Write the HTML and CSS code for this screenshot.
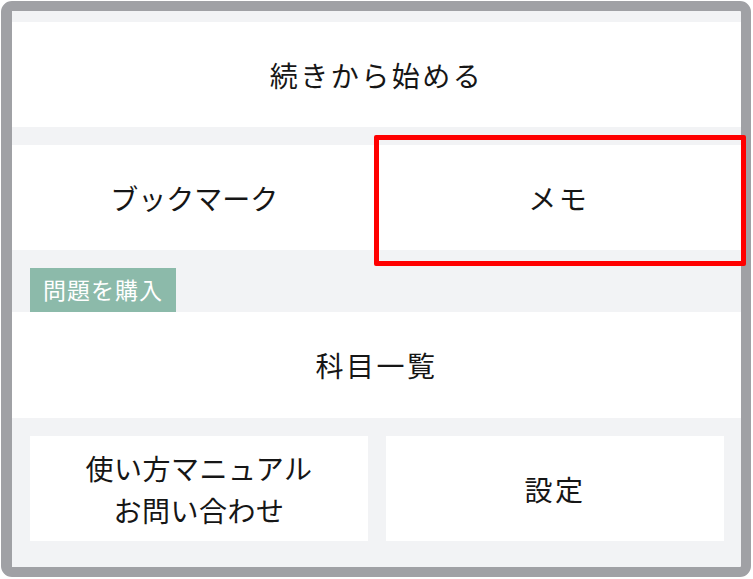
FILE: index.html
```html
<!DOCTYPE html>
<html lang="ja">
<head>
<meta charset="utf-8">
<link rel="stylesheet" href="styles.css">
</head>
<body>
<div class="frame">
  <div class="inner">
    <div class="row row-first"><span class="label">続きから始める</span></div>
    <div class="row row-split">
      <div class="cell"><span class="label tight">ブックマーク</span></div>
      <div class="cell"><span class="label">メモ</span></div>
    </div>
    <div class="badge-area"><span class="badge">問題を購入</span></div>
    <div class="row row-subjects"><span class="label">科目一覧</span></div>
    <div class="cards">
      <div class="card"><span class="label multi">使い方マニュアル<br>お問い合わせ</span></div>
      <div class="card"><span class="label">設定</span></div>
    </div>
  </div>
  <div class="highlight"></div>
</div>
</body>
</html>
```

FILE: styles.css
```css
* { box-sizing: border-box; }
html, body {
  margin: 0;
  padding: 0;
  background: #ffffff;
}
body {
  width: 753px;
  height: 579px;
  padding: 1px 2px 2px 1px;
  font-family: "Noto Sans CJK JP", "Noto Sans", sans-serif;
  color: #161616;
}
.frame {
  position: relative;
  width: 750px;
  height: 576px;
  border: 10px solid #a0a1a5;
  border-left-width: 11px;
  border-radius: 11px;
  background: #f2f3f5;
}
.inner {
  display: flex;
  flex-direction: column;
  height: 100%;
  padding-top: 11px;
}
.row {
  background: #ffffff;
  height: 105px;
  display: flex;
  align-items: center;
  justify-content: center;
}
.row-first { margin-bottom: 18px; }
.row-split { justify-content: stretch; }
.row-split .cell {
  flex: 1;
  height: 100%;
  display: flex;
  align-items: center;
  justify-content: center;
}
.badge-area {
  height: 62px;
  display: flex;
  align-items: flex-end;
  padding-left: 18px;
}
.badge {
  display: inline-flex;
  align-items: center;
  justify-content: center;
  width: 146px;
  height: 44px;
  background: #8cbaaa;
  color: #ffffff;
  font-size: 23px;
  letter-spacing: 1px;
  font-weight: 400;
  padding-bottom: 2px;
}
.row-subjects { height: 106px; }
.label {
  font-size: 28px;
  letter-spacing: 2.5px;
  font-weight: 400;
  line-height: 1;
  text-align: center;
}
.label.tight { letter-spacing: 0; }
.label.multi { line-height: 42px; letter-spacing: 0.5px; }
.cards {
  display: flex;
  gap: 18px;
  padding: 18px 17px 0 18px;
}
.card {
  flex: 1;
  height: 105px;
  background: #ffffff;
  display: flex;
  align-items: center;
  justify-content: center;
}
.highlight {
  position: absolute;
  left: 362px;
  top: 124px;
  width: 372px;
  height: 131px;
  border: 5px solid #ff0000;
  border-radius: 2px;
}
```
